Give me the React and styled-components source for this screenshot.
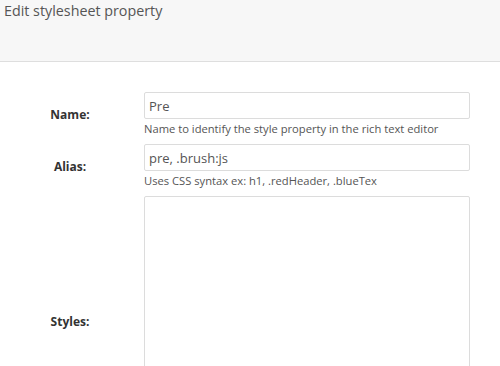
import React from "react";
import styled, { createGlobalStyle } from "styled-components";

const Global = createGlobalStyle`
  body {
    margin: 0;
    background: #fff;
    font-family: "Open Sans", "Liberation Sans", sans-serif;
    overflow: hidden;
  }
`;

const S = {
  Header: styled.div`
    height: 62px;
    background: #f7f7f7;
    border-bottom: 1px solid #dedede;
    box-sizing: border-box;
  `,
  Title: styled.h1`
    margin: 0;
    padding: 1px 0 0 4px;
    font-size: 14.3px;
    font-weight: 400;
    line-height: 19px;
    color: #555;
  `,
  Form: styled.div`
    display: flex;
    flex-direction: column;
    gap: 8px;
    padding-top: 30px;
  `,
  Row: styled.div`
    display: flex;
    align-items: center;
  `,
  Label: styled.label`
    width: 140px;
    margin-right: 4px;
    text-align: center;
    font-size: 12px;
    font-weight: 700;
    color: #333;
  `,
  Field: styled.div`
    width: 326px;
    display: flex;
    flex-direction: column;
  `,
  Input: styled.input`
    height: 27px;
    box-sizing: border-box;
    border: 1px solid #dcdcdc;
    border-radius: 2px;
    padding: 0 4px;
    font-family: inherit;
    font-size: 13px;
    color: #555;
    outline: none;
  `,
  TextArea: styled.textarea`
    height: 250px;
    box-sizing: border-box;
    border: 1px solid #dcdcdc;
    border-radius: 2px;
    padding: 4px;
    font-family: inherit;
    font-size: 13px;
    resize: none;
    outline: none;
  `,
  Help: styled.span`
    margin-top: 2px;
    font-size: 11.2px;
    line-height: 15px;
    color: #555;
  `,
};

const fields = [
  { label: "Name:", value: "Pre", help: "Name to identify the style property in the rich text editor" },
  { label: "Alias:", value: "pre, .brush:js", help: "Uses CSS syntax ex: h1, .redHeader, .blueTex" },
];

const App = () => {
  return (
    <>
      <Global />
      <S.Header>
        <S.Title>Edit stylesheet property</S.Title>
      </S.Header>
      <S.Form>
        {fields.map((f) => (
          <S.Row key={f.label}>
            <S.Label>{f.label}</S.Label>
            <S.Field>
              <S.Input defaultValue={f.value} />
              <S.Help>{f.help}</S.Help>
            </S.Field>
          </S.Row>
        ))}
        <S.Row>
          <S.Label>Styles:</S.Label>
          <S.Field>
            <S.TextArea />
          </S.Field>
        </S.Row>
      </S.Form>
    </>
  );
};

export default App;
